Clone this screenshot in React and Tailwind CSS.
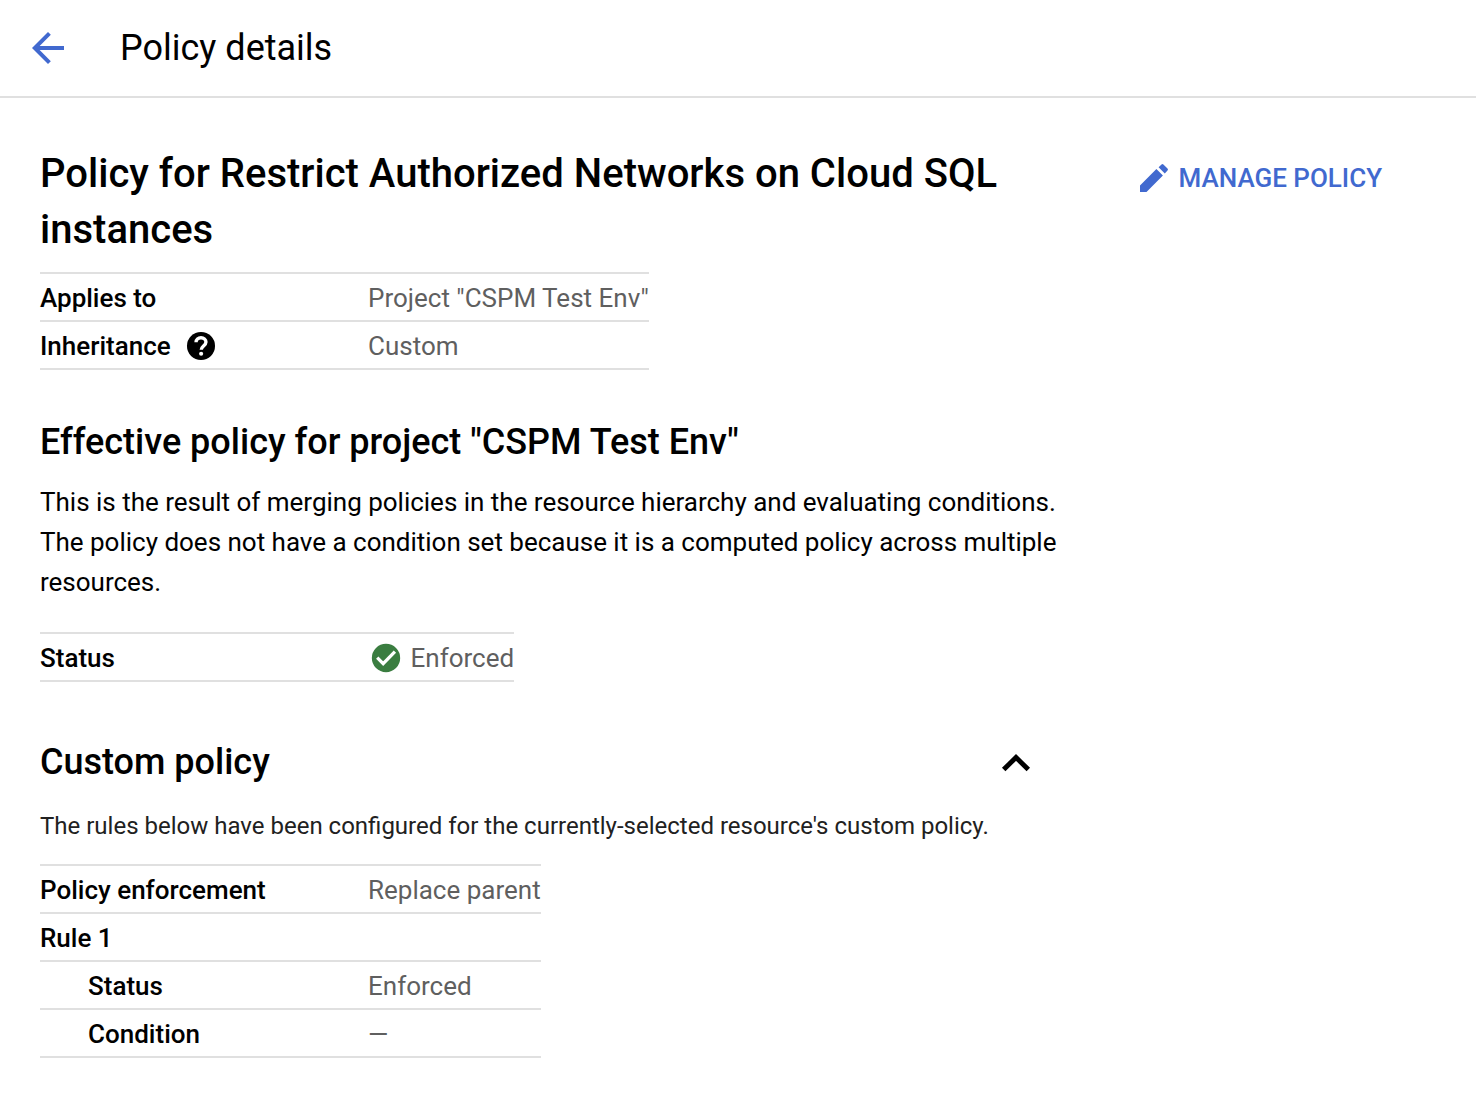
import React from "react";

const rowLine = "flex h-12 items-center border-b-2 border-[#e0e0e0] pt-[2px] leading-10";

function Row({ label, children, indent, icon }) {
  return (
    <div className={rowLine}>
      <dt className={`flex w-[328px] shrink-0 items-center font-medium text-black ${indent ? "pl-12" : ""}`}>
        {label}
        {icon}
      </dt>
      <dd className="flex items-center whitespace-nowrap text-[#5f5f5f]">{children}</dd>
    </div>
  );
}

function Table({ className, children }) {
  return <dl className={`border-t-2 border-[#e0e0e0] text-[26px] ${className}`}>{children}</dl>;
}

export default function App() {
  return (
    <div className="h-[1102px] w-[1476px] overflow-hidden bg-white font-['Roboto',sans-serif] text-black">
      <header className="flex h-[98px] items-center border-b-2 border-[#e0e0e0] pl-6">
        <svg className="size-12 fill-[#4169cf]" viewBox="0 0 24 24">
          <path d="M20 11H7.83l5.59-5.59L12 4l-8 8 8 8 1.41-1.41L7.83 13H20v-2z" />
        </svg>
        <span className="ml-12 text-[36px] leading-10">Policy details</span>
      </header>
      <div className="flex pl-10 pt-12">
        <main className="w-[1032px] shrink-0">
          <h1 className="w-[1000px] text-[40px] font-medium leading-[56px] tracking-[0.01px]">
            Policy for Restrict Authorized Networks on Cloud SQL<br />instances
          </h1>
          <Table className="mt-[14px] w-[609px]">
            <Row label="Applies to">Project "CSPM Test Env"</Row>
            <Row
              label="Inheritance"
              icon={
                <svg className="-my-1 ml-[13px] size-[34px] fill-black" viewBox="0 0 24 24">
                  <circle cx="12" cy="12" r="9.9" />
                  <path className="fill-none stroke-white" strokeWidth="2.4" d="M8.5 9.4c0-1.800 1.500-3.200 3.500-3.200s3.500 1.200 3.500 3c0 1.300-.8 2-1.700 2.800-.9.800-1.600 1.300-1.600 2.700" />
                  <circle className="fill-white" cx="12.100" cy="17.500" r="1.450" />
                </svg>
              }
            >
              Custom
            </Row>
          </Table>
          <h2 className="mt-12 text-[36px] font-medium leading-[48px]">Effective policy for project "CSPM Test Env"</h2>
          <p className="mt-4 whitespace-nowrap text-[26px] leading-10 tracking-[-0.01px]">
            This is the result of merging policies in the resource hierarchy and evaluating conditions.<br />
            The policy does not have a condition set because it is a computed policy across multiple<br />
            resources.
          </p>
          <Table className="mt-[30px] w-[474px]">
            <Row label="Status">
              <svg className="ml-px mr-[7.500px] size-[34px] fill-[#3a7d40]" viewBox="0 0 24 24">
                <circle cx="12" cy="12" r="10" />
                <path className="fill-none stroke-white" strokeWidth="2.300" d="M5.800 11.800 10 16 18.300 7.500" />
              </svg>
              Enforced
            </Row>
          </Table>
          <div className="mt-14 flex h-12 items-center justify-between pr-8">
            <h2 className="text-[36px] font-medium leading-[48px]">Custom policy</h2>
            <svg className="size-12 fill-none stroke-black" viewBox="0 0 48 48">
              <path strokeWidth="4.900" d="M11.700 31.600 24 19.400 36.300 31.600" />
            </svg>
          </div>
          <p className="mt-5 whitespace-nowrap text-[24px] leading-10 text-[#212121]">
            The rules below have been configured for the currently-selected resource's custom policy.
          </p>
          <Table className="mt-[18px] w-[501px]">
            <Row label="Policy enforcement">Replace parent</Row>
            <Row label="Rule 1" />
            <Row label="Status" indent>Enforced</Row>
            <Row label="Condition" indent>—</Row>
          </Table>
        </main>
        <button className="ml-16 mt-2 flex h-12 items-center whitespace-nowrap text-[26px] font-medium text-[#4169cf]">
          <svg className="mr-[6.500px] size-9 fill-[#4169cf]" viewBox="0 0 36 36">
            <path d="M4 25.500V32h6.500L26.900 15.500l-6.500-6.500zM31.500 10.500a1.300 1.300 0 0 0 0-1.900l-4.100-4.100a1.300 1.300 0 0 0-1.900 0L22.600 7.200l6.200 6.200z" />
          </svg>
          MANAGE POLICY
        </button>
      </div>
    </div>
  );
}
